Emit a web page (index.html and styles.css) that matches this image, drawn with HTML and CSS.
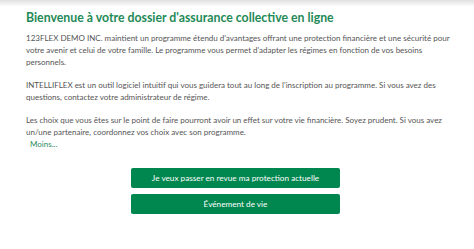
FILE: index.html
```html
<!DOCTYPE html>
<html lang="fr">
<head>
	<meta charset="UTF-8">
	<title>Bienvenue</title>
	<link rel="stylesheet" href="styles.css">
</head>
<body>
	<div class="topbar"></div>
	<div class="content">
		<h1>Bienvenue à votre dossier d'assurance collective en ligne</h1>
		<p>123FLEX DEMO INC. maintient un programme étendu d'avantages offrant une protection financière et une sécurité pour votre avenir et celui de votre famille. Le programme vous permet d'adapter les régimes en fonction de vos besoins personnels.</p>
		<p>INTELLIFLEX est un outil logiciel intuitif qui vous guidera tout au long de l'inscription au programme. Si vous avez des questions, contactez votre administrateur de régime.</p>
		<p class="last">Les choix que vous êtes sur le point de faire pourront avoir un effet sur votre vie financière. Soyez prudent. Si vous avez un/une partenaire, coordonnez vos choix avec son programme.</p>
		<a class="more" href="#">Moins...</a>
		<div class="actions">
			<button class="btn">Je veux passer en revue ma protection actuelle</button>
			<button class="btn">Événement de vie</button>
		</div>
	</div>
</body>
</html>
```
FILE: styles.css
```css
*{
	margin: 0;
	padding: 0;
	box-sizing: border-box;
}
body{
	background: #fff;
	font-family: Lato, "Liberation Sans", sans-serif;
	color: #555;
}
.topbar{
	height: 6px;
	background: linear-gradient(#e0e0e0, #fbfbfb);
}
.content{
	padding: 4px 24px 0 26px;
}
h1{
	font-size: 12.3px;
	font-weight: bold;
	color: #1f8a57;
	line-height: 16px;
	margin-bottom: 6px;
}
p{
	font-size: 8px;
	line-height: 12px;
	margin-bottom: 11px;
}
p.last{
	margin-bottom: 0;
}
.more{
	display: block;
	margin-left: 4px;
	font-size: 8px;
	line-height: 12px;
	color: #2a8a5e;
	text-decoration: none;
}
.actions{
	display: flex;
	flex-direction: column;
	align-items: center;
	gap: 6px;
	margin: 18px 5px 0 0;
}
.btn{
	width: 209px;
	height: 20px;
	border: none;
	border-radius: 2px;
	background: #00864f;
	color: #fff;
	font-family: Lato, "Liberation Sans", sans-serif;
	font-size: 8.2px;
}
```
